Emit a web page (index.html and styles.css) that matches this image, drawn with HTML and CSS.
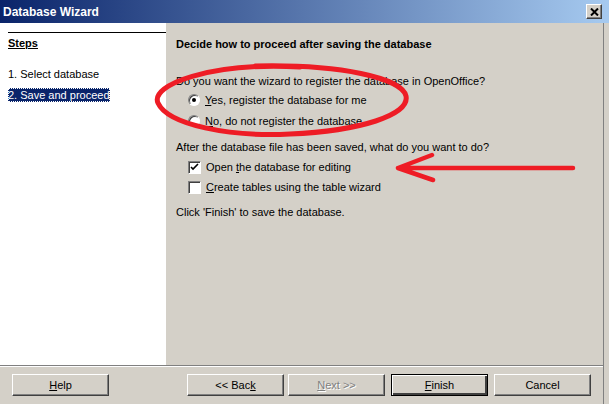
FILE: index.html
```html
<!DOCTYPE html>
<html>
<head>
<meta charset="utf-8">
<link rel="stylesheet" href="styles.css">
</head>
<body>
<div class="window">
  <div class="titlebar">
    <span class="title">Database Wizard</span>
    <span class="close"><svg width="9" height="8" viewBox="0 0 9 8"><path d="M1 0.5 L8 7.5 M8 0.5 L1 7.5" stroke="#000" stroke-width="2"/></svg></span>
  </div>
  <div class="main">
    <div class="sidebar">
      <div class="steps-head">Steps</div>
      <div class="step">1. Select database</div>
      <div class="step"><span class="sel">2. Save and proceed</span></div>
    </div>
    <div class="content">
      <div class="heading">Decide how to proceed after saving the database</div>
      <div class="q">Do you want the wizard to register the database in OpenOffice?</div>
      <div class="opt"><span class="radio on"></span><span><u>Y</u>es, register the database for me</span></div>
      <div class="opt"><span class="radio"></span><span><u>N</u>o, do not register the database</span></div>
      <div class="q q2">After the database file has been saved, what do you want to do?</div>
      <div class="opt"><span class="check on"><svg width="9" height="9" viewBox="0 0 9 9"><path d="M1 4 L3 6 L8 1" fill="none" stroke="#000" stroke-width="1.6"/></svg></span><span>Open <u>t</u>he database for editing</span></div>
      <div class="opt tight"><span class="check"></span><span><u>C</u>reate tables using the table wizard</span></div>
      <div class="q q3">Click 'Finish' to save the database.</div>
    </div>
  </div>
  <div class="footer">
    <button class="btn"><u>H</u>elp</button>
    <div class="spacer"></div>
    <button class="btn">&lt;&lt; Bac<u>k</u></button>
    <button class="btn disabled"><u>N</u>ext &gt;&gt;</button>
    <button class="btn default"><u>F</u>inish</button>
    <button class="btn">Cancel</button>
  </div>
  <svg class="marks" width="609" height="404" viewBox="0 0 609 404">
    <path d="M300 67 C 210 62, 150 85, 158 103 C 168 125, 230 137, 290 134 C 360 131, 410 115, 406 96 C 402 78, 340 64, 255 66" fill="none" stroke="#ee1c25" stroke-width="5" stroke-linecap="round"/>
    <path d="M573 168 L398 168 M432 155 L398 168 L433 180" fill="none" stroke="#ee1c25" stroke-width="4.5" stroke-linecap="round" stroke-linejoin="round"/>
  </svg>
</div>
</body>
</html>
```
FILE: styles.css
```css
* { box-sizing: border-box; }
html, body { margin: 0; padding: 0; }
body {
  width: 609px;
  height: 404px;
  overflow: hidden;
  font-family: "Liberation Sans", Arial, sans-serif;
  font-size: 11px;
  color: #000;
  background: #d4d0c8;
}
.window {
  position: relative;
  width: 609px;
  height: 404px;
  background: #d4d0c8;
  display: flex;
  flex-direction: column;
}
.window::after {
  content: "";
  position: absolute;
  top: 23px;
  bottom: 0;
  left: 603px;
  width: 1px;
  background: #808080;
}
.titlebar {
  height: 23px;
  background: linear-gradient(to right, #0a246a, #a6caf0);
  display: flex;
  align-items: center;
  justify-content: space-between;
  padding: 0 7px 0 3px;
  flex: none;
}
.title {
  color: #fff;
  font-weight: bold;
  font-size: 12px;
}
.close {
  width: 16px;
  height: 15px;
  background: #d4d0c8;
  border: 1px solid;
  border-color: #fff #404040 #404040 #fff;
  box-shadow: inset -1px -1px 0 #808080;
  display: flex;
  align-items: center;
  justify-content: center;
}
.main {
  display: flex;
  height: 342px;
  flex: none;
  width: 603px;
}
.sidebar {
  width: 166px;
  background: #fff;
  padding: 9px 0 0 8px;
}
.steps-head {
  border-top: 1px solid #000;
  padding-top: 4px;
  font-weight: bold;
  text-decoration: underline;
  height: 35px;
}
.step {
  height: 21px;
  line-height: 15px;
}
.sel {
  background: #0a246a;
  color: #fff;
  outline: 1px dotted #fff;
  outline-offset: -1px;
  padding: 1px 0;
}
.content {
  flex: 1;
  padding: 15px 0 0 10px;
}
.heading {
  font-weight: bold;
  height: 37px;
}
.q {
  height: 14px;
}
.opt {
  display: flex;
  align-items: center;
  gap: 5px;
  padding-left: 12px;
  height: 20px;
  margin-top: 1px;
}
.opt.tight { margin-top: 0; }
.radio {
  width: 12px;
  height: 12px;
  border-radius: 50%;
  background: #fff;
  border: 1px solid;
  border-color: #808080 #fff #fff #808080;
  box-shadow: inset 1px 1px 0 #404040;
  display: flex;
  align-items: center;
  justify-content: center;
}
.radio.on::after {
  content: "";
  width: 4px;
  height: 4px;
  border-radius: 50%;
  background: #000;
}
.check {
  width: 13px;
  height: 13px;
  background: #fff;
  border: 1px solid;
  border-color: #808080 #fff #fff #808080;
  box-shadow: inset 1px 1px 0 #404040;
  display: flex;
  align-items: center;
  justify-content: center;
}
.q2 { margin-top: 10px; height: 15px; }
.q3 { margin-top: 9px; }
.footer {
  flex: 1;
  width: 603px;
  border-top: 1px solid #808080;
  box-shadow: inset 0 1px 0 #fff;
  display: flex;
  align-items: flex-start;
  padding: 8px 0 0 12px;
  gap: 4px;
}
.spacer { width: 70px; }
.btn {
  width: 97px;
  height: 22px;
  background: #d4d0c8;
  font-family: "Liberation Sans", Arial, sans-serif;
  font-size: 11px;
  color: #000;
  border: 1px solid;
  border-color: #fff #404040 #404040 #fff;
  box-shadow: inset -1px -1px 0 #808080;
  padding: 0;
}
.btn.disabled {
  color: #808080;
  text-shadow: 1px 1px 0 #fff;
}
.btn.default {
  border: 1px solid #000;
  box-shadow: inset 1px 1px 0 #fff, inset -2px -2px 0 #404040, inset -1px -1px 0 #808080;
  margin-left: 2px;
  margin-right: 2px;
}
.marks {
  position: absolute;
  left: 0;
  top: 0;
  pointer-events: none;
}
```
